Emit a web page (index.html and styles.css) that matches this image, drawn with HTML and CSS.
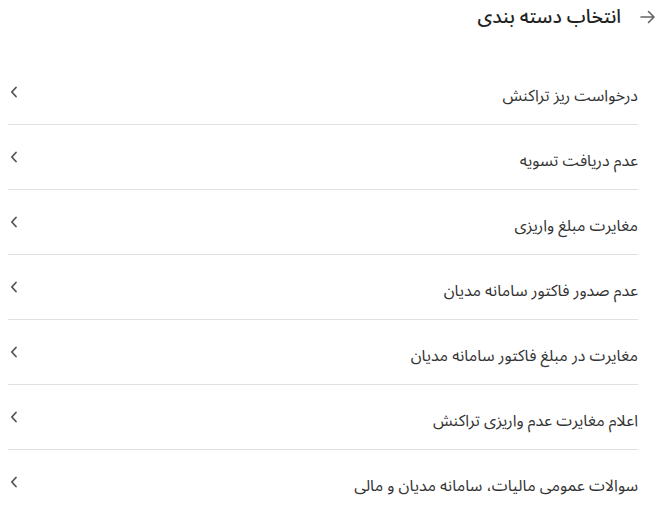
FILE: index.html
```html
<!DOCTYPE html>
<html lang="fa" dir="rtl">
<head>
<meta charset="utf-8">
<link rel="stylesheet" href="styles.css">
</head>
<body>
<div class="page">
  <header class="header">
    <svg class="back" width="16" height="14" viewBox="0 0 16 14"><path d="M1 7h13M8.5 1.5L14 7l-5.5 5.5" fill="none" stroke="#666" stroke-width="1.6" stroke-linecap="round" stroke-linejoin="round"/></svg>
    <h1 class="title">انتخاب دسته بندی</h1>
  </header>
  <ul class="list">
    <li class="item"><span>درخواست ریز تراکنش</span><svg class="chev" width="8" height="12" viewBox="0 0 8 12"><path d="M6 1.5L1.8 6 6 10.5" fill="none" stroke="#555" stroke-width="1.8" stroke-linecap="round" stroke-linejoin="round"/></svg></li>
    <li class="item"><span>عدم دریافت تسویه</span><svg class="chev" width="8" height="12" viewBox="0 0 8 12"><path d="M6 1.5L1.8 6 6 10.5" fill="none" stroke="#555" stroke-width="1.8" stroke-linecap="round" stroke-linejoin="round"/></svg></li>
    <li class="item"><span>مغایرت مبلغ واریزی</span><svg class="chev" width="8" height="12" viewBox="0 0 8 12"><path d="M6 1.5L1.8 6 6 10.5" fill="none" stroke="#555" stroke-width="1.8" stroke-linecap="round" stroke-linejoin="round"/></svg></li>
    <li class="item"><span>عدم صدور فاکتور سامانه مدیان</span><svg class="chev" width="8" height="12" viewBox="0 0 8 12"><path d="M6 1.5L1.8 6 6 10.5" fill="none" stroke="#555" stroke-width="1.8" stroke-linecap="round" stroke-linejoin="round"/></svg></li>
    <li class="item"><span>مغایرت در مبلغ فاکتور سامانه مدیان</span><svg class="chev" width="8" height="12" viewBox="0 0 8 12"><path d="M6 1.5L1.8 6 6 10.5" fill="none" stroke="#555" stroke-width="1.8" stroke-linecap="round" stroke-linejoin="round"/></svg></li>
    <li class="item"><span>اعلام مغایرت عدم واریزی تراکنش</span><svg class="chev" width="8" height="12" viewBox="0 0 8 12"><path d="M6 1.5L1.8 6 6 10.5" fill="none" stroke="#555" stroke-width="1.8" stroke-linecap="round" stroke-linejoin="round"/></svg></li>
    <li class="item"><span>سوالات عمومی مالیات، سامانه مدیان و مالی</span><svg class="chev" width="8" height="12" viewBox="0 0 8 12"><path d="M6 1.5L1.8 6 6 10.5" fill="none" stroke="#555" stroke-width="1.8" stroke-linecap="round" stroke-linejoin="round"/></svg></li>
  </ul>
</div>
</body>
</html>
```

FILE: styles.css
```css
* { box-sizing: border-box; }
html, body { margin: 0; padding: 0; background: #fff; }
body {
  font-family: "Noto Sans Arabic", "DejaVu Sans", "Noto Sans", sans-serif;
  color: #2b2b2b;
}
.page {
  padding: 0 27px 0 8px;
}
.header {
  display: flex;
  align-items: center;
  gap: 16px;
  height: 34px;
  margin-right: -18px;
}
.back { flex: none; }
.title {
  margin: 0;
  padding: 0 3px;
  font-size: 19px;
  line-height: 34px;
  font-weight: 500;
  color: #222;
  white-space: nowrap;
}
.list {
  list-style: none;
  margin: 26px 0 0 0;
  padding: 0;
}
.item {
  display: flex;
  align-items: center;
  justify-content: space-between;
  height: 65px;
  border-bottom: 1px solid #e0e0e0;
  padding: 8px 0 0 0;
  font-size: 16px;
  line-height: 30px;
  color: #333;
}
.chev { flex: none; margin-left: 2px; margin-top: -8px; }
```
